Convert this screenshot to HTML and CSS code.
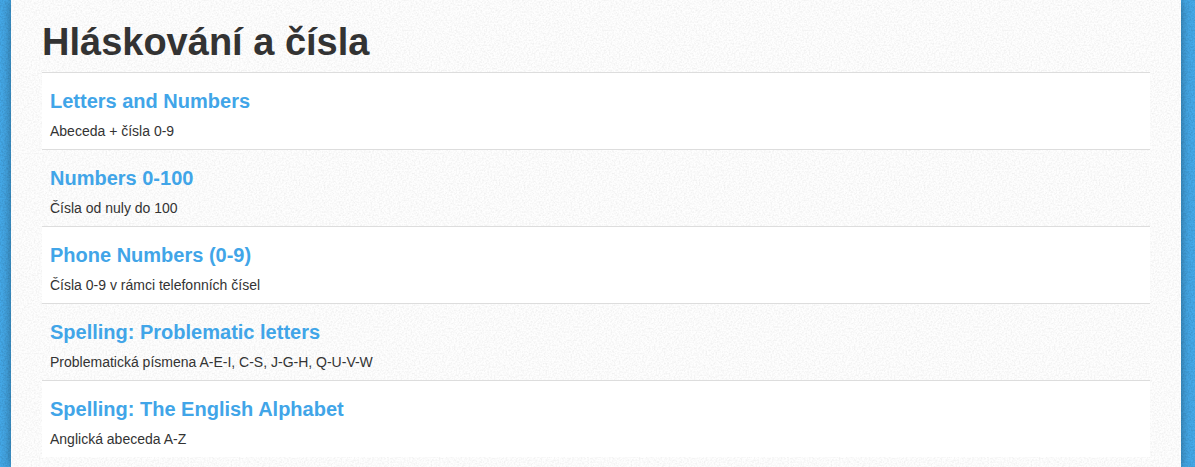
FILE: index.html
```
<!DOCTYPE html>
<html lang="cs">
<head>
  <meta charset="utf-8">
  <meta name="viewport" content="width=device-width, initial-scale=1.0">
  <title>Hláskování a čísla</title>
  <link rel="stylesheet" href="styles.css">
</head>
<body>

<div class="page">
  <h1>Hláskování a čísla</h1>

  <table class="lessons">
    <tr>
      <td>
        <h4><a href="#letters-and-numbers">Letters and Numbers</a></h4>
        <p>Abeceda + čísla 0-9</p>
      </td>
    </tr>
    <tr>
      <td>
        <h4><a href="#numbers">Numbers 0-100</a></h4>
        <p>Čísla od nuly do 100</p>
      </td>
    </tr>
    <tr>
      <td>
        <h4><a href="#phone-numbers">Phone Numbers (0-9)</a></h4>
        <p>Čísla 0-9 v rámci telefonních čísel</p>
      </td>
    </tr>
    <tr>
      <td>
        <h4><a href="#problematic-letters">Spelling: Problematic letters</a></h4>
        <p>Problematická písmena A-E-I, C-S, J-G-H, Q-U-V-W</p>
      </td>
    </tr>
    <tr>
      <td>
        <h4><a href="#alphabet">Spelling: The English Alphabet</a></h4>
        <p>Anglická abeceda A-Z</p>
      </td>
    </tr>
  </table>
</div>

</body>
</html>
```
FILE: styles.css
```
body {
  margin: 0;
  padding: 0 14px 0 11px;
  font-family: "Liberation Sans", Arial, sans-serif;
  font-size: 14px;
  line-height: 20px;
  color: #333;
  background-color: #45aaea;
  /* Dark grain */
  background-image: url("data:image/svg+xml,%3Csvg xmlns='http://www.w3.org/2000/svg' width='200' height='200'%3E%3Cfilter id='n' x='0' y='0' width='100%25' height='100%25'%3E%3CfeTurbulence type='fractalNoise' baseFrequency='.6' numOctaves='2' stitchTiles='stitch'/%3E%3CfeColorMatrix values='0 0 0 0 0 0 0 0 0 0 0 0 0 0 0 .25 0 0 0 -.09'/%3E%3C/filter%3E%3Crect width='200' height='200' filter='url(%23n)'/%3E%3C/svg%3E");
}

/* Paper sheet */
.page {
  padding: 22px 31px 10px;
  background-color: #fefefe;
  background-image: url("data:image/svg+xml,%3Csvg xmlns='http://www.w3.org/2000/svg' width='200' height='200'%3E%3Cfilter id='n' x='0' y='0' width='100%25' height='100%25'%3E%3CfeTurbulence type='fractalNoise' baseFrequency='.6' numOctaves='2' stitchTiles='stitch'/%3E%3CfeColorMatrix values='0 0 0 0 0 0 0 0 0 0 0 0 0 0 0 .12 0 0 0 -.045'/%3E%3C/filter%3E%3Crect width='200' height='200' filter='url(%23n)'/%3E%3C/svg%3E");
  box-shadow: 0 0 10px rgba(0, 0, 0, 0.4);
}

h1 {
  margin: 0 0 10px;
  font-size: 38px;
  line-height: 40px;
}

/* Striped list */
.lessons {
  width: 100%;
  border-collapse: collapse;
  border-spacing: 0;
}

.lessons td {
  padding: 8px;
  border-top: 1px solid #ddd;
}

.lessons tr:nth-child(odd) td {
  background: #fff;
}

.lessons h4 {
  margin: 10px 0;
  font-size: 20px;
  line-height: 20px;
}

.lessons p {
  margin: 0;
}

a {
  color: #41a5e8;
  text-decoration: none;
}

a:hover {
  text-decoration: underline;
}
```
